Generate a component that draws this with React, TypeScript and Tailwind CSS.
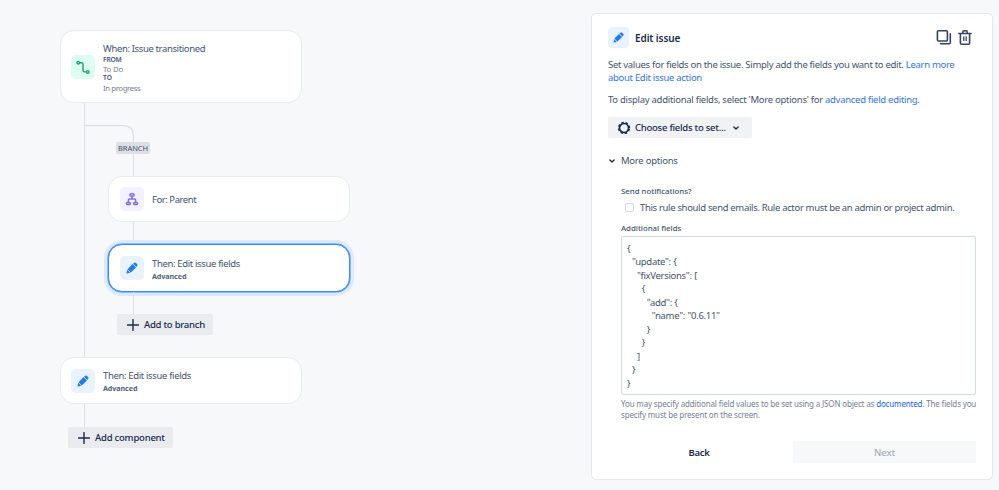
import React, { useState } from 'react';

interface IconProps {
  className?: string;
}

const PencilIcon: React.FC<IconProps> = ({ className }) => (
  <svg viewBox="0 0 14 14" className={className} fill="currentColor">
    <path d="M1.8 8.4 L7.7 2.4 L11.6 6.3 L5.6 12.2 Z" />
    <path d="M8.3 1.9 L9.6 .8 Q10.5 .1 11.4 .9 L13.1 2.6 Q13.9 3.5 13.2 4.4 L12.1 5.7 Z" />
    <path d="M1.4 9.1 L4.9 12.6 L1.1 13.4 Q.4 13.5 .6 12.9 Z" />
  </svg>
);

const TransitionIcon: React.FC = () => (
  <svg viewBox="0 0 14 14" className="size-[14px] text-[#22a06b]" fill="none" stroke="currentColor" strokeWidth="1.4">
    <circle cx="2.2" cy="2.7" r="1.3" />
    <circle cx="11.8" cy="11.9" r="1.3" />
    <path d="M3.8 2.7 H5.6 Q7 2.7 7 4.1 V10.5 Q7 11.9 8.4 11.9 H10.3" />
  </svg>
);

const TreeIcon: React.FC = () => (
  <svg viewBox="0 0 14 14" className="size-[14px] text-[#8270db]" fill="none" stroke="currentColor" strokeWidth="1.5">
    <rect x="5" y="1.7" width="4" height="2.3" rx="0.8" />
    <rect x="1.5" y="10.4" width="3.8" height="2.2" rx="0.8" />
    <rect x="8.7" y="10.4" width="3.8" height="2.2" rx="0.8" />
    <path d="M7 4.2 V7 M3.4 10.2 V8 Q3.4 7 4.4 7 H9.6 Q10.6 7 10.6 8 V10.2" />
  </svg>
);

const PlusIcon: React.FC = () => (
  <svg viewBox="0 0 12 12" className="size-3 shrink-0" stroke="currentColor" strokeWidth="1.4" strokeLinecap="round">
    <path d="M6 0.6 V11.4 M0.6 6 H11.4" />
  </svg>
);

const GearIcon: React.FC = () => (
  <svg viewBox="0 0 14 14" className="size-[14px] shrink-0" fill="none" stroke="currentColor">
    <circle cx="7" cy="7" r="4.5" strokeWidth="1.7" />
    <circle cx="7" cy="7" r="5.4" strokeWidth="1.5" strokeDasharray="2.4 1.84" strokeDashoffset="-0.9" />
  </svg>
);

const ChevronIcon: React.FC = () => (
  <svg viewBox="0 0 6 4" className="h-1 w-1.5 shrink-0" fill="none" stroke="currentColor" strokeWidth="1.4" strokeLinecap="round" strokeLinejoin="round">
    <path d="M0.9 0.9 L3 2.9 L5.1 0.9" />
  </svg>
);

const CopyIcon: React.FC = () => (
  <svg viewBox="0 0 16 16" className="size-4" fill="none" stroke="currentColor" strokeWidth="1.6" strokeLinejoin="round" strokeLinecap="round">
    <rect x="1.4" y="0.8" width="10" height="10.2" rx="1" />
    <path d="M14.3 3.9 V12.6 Q14.3 13.8 13.1 13.8 H4.6" />
  </svg>
);

const TrashIcon: React.FC = () => (
  <svg viewBox="0 0 14 16" className="h-4 w-[14px]" fill="none" stroke="currentColor" strokeWidth="1.6" strokeLinejoin="round" strokeLinecap="round">
    <path d="M0.9 3.5 H13.1 M4.8 3.3 V2.1 Q4.8 0.8 6 0.8 H8 Q9.2 0.8 9.2 2.1 V3.3" />
    <path d="M2.4 3.8 V12.9 Q2.4 14.2 3.6 14.2 H10.4 Q11.6 14.2 11.6 12.9 V3.8" />
    <path d="M5.8 7 V10.4 M8.2 7 V10.4" strokeWidth="1.3" />
  </svg>
);

interface StepCardProps {
  icon: React.ReactNode;
  iconClass: string;
  className: string;
  children: React.ReactNode;
}

const StepCard: React.FC<StepCardProps> = ({ icon, iconClass, className, children }) => (
  <div className={`flex w-[242px] items-center bg-white ${className}`}>
    <div className={`flex size-6 shrink-0 items-center justify-center rounded-[5px] ${iconClass}`}>{icon}</div>
    <div className="ml-2">{children}</div>
  </div>
);

const EditStepText: React.FC = () => (
  <div className="pt-[3px]">
    <div className="text-[9.5px] leading-[13px] tracking-[-0.35px]">Then: Edit issue fields</div>
    <div className="text-[7.2px] leading-[13px] font-bold tracking-[-0.1px] text-[#54637c]">Advanced</div>
  </div>
);

const json = `{
  "update": {
    "fixVersions": [
      {
        "add": {
          "name": "0.6.11"
        }
      }
    ]
  }
}`;

const App: React.FC = () => {
  const [sendEmails, setSendEmails] = useState(false);
  const [fields, setFields] = useState(json);

  return (
    <div className="flex h-[490px] w-[999px] overflow-hidden bg-[#f7f8fa] font-['Noto_Sans',sans-serif] text-[#44546f]">
      {/* Rule flow */}
      <section className="w-[591px] pt-[30px] pl-[60px]">
        <StepCard
          className="h-[73px] rounded-[14px] border border-[#e9ebee] pl-[10px]"
          iconClass="bg-[#dcfff1]"
          icon={<TransitionIcon />}
        >
          <div className="pt-[2px] text-[9.5px] leading-[13px] tracking-[-0.37px]">When: Issue transitioned</div>
          <div className="text-[6.7px] leading-[10px] font-semibold tracking-[-0.2px]">FROM</div>
          <div className="text-[7.8px] leading-[9px] tracking-[-0.2px] text-[#758195]">To Do</div>
          <div className="text-[6.7px] leading-[8px] font-semibold">TO</div>
          <div className="text-[7.8px] leading-[12px] tracking-[-0.4px] text-[#758195]">In progress</div>
        </StepCard>

        <div className="ml-6 h-[254px] border-l border-[#dcdfe4] pt-[22px]">
          <svg viewBox="0 0 50 17" className="h-[17px] w-[50px]" fill="none" stroke="#dcdfe4" strokeWidth="1.2">
            <path d="M0 0.6 H38 Q48.4 0.6 48.4 11 V17" />
          </svg>
          <div className="ml-[31px] w-[34px] rounded-[2px] bg-[#dcdfe4] text-center text-[7.5px] leading-[12px] tracking-[-0.05px]">BRANCH</div>
          <div className="ml-[48px] h-[22px] w-px bg-[#dcdfe4]" />
          <StepCard
            className="ml-[23px] h-[46px] rounded-[14px] border border-[#e9ebee] pl-[11px]"
            iconClass="bg-[#f3f0ff]"
            icon={<TreeIcon />}
          >
            <div className="text-[9.5px] leading-[13px] tracking-[-0.45px]">For: Parent</div>
          </StepCard>
          <div className="ml-[48px] h-[22px] w-px bg-[#dcdfe4]" />
          <StepCard
            className="ml-[23px] h-[48px] rounded-[14px] border border-[#388bff] pl-[11px] shadow-[0_0_0_0.5px_#388bff,0_0_0_4px_#dbeafe]"
            iconClass="bg-[#e9f2ff]"
            icon={<PencilIcon className="size-3 text-[#1d7afc]" />}
          >
            <EditStepText />
          </StepCard>
          <div className="ml-[48px] h-[22px] w-px bg-[#dcdfe4]" />
          <button className="ml-8 flex h-[21px] w-[96px] items-center gap-[5px] rounded-[2px] bg-[#e9ebee] pt-px pl-[10px] text-[9.5px] font-medium tracking-[-0.25px] whitespace-nowrap text-[#172b4d]">
            <PlusIcon />
            Add to branch
          </button>
        </div>

        <StepCard
          className="h-[47px] rounded-[14px] border border-[#e9ebee] pl-[10px]"
          iconClass="bg-[#e9f2ff]"
          icon={<PencilIcon className="size-3 text-[#1d7afc]" />}
        >
          <EditStepText />
        </StepCard>
        <div className="ml-6 h-[23px] w-px bg-[#dcdfe4]" />
        <button className="ml-2 flex h-[21px] w-[105px] items-center gap-[5px] rounded-[2px] bg-[#e9ebee] pl-[10px] text-[9.5px] font-medium tracking-[-0.22px] whitespace-nowrap text-[#172b4d]">
          <PlusIcon />
          <span className="pt-px">Add component</span>
        </button>
      </section>

      {/* Action settings */}
      <section className="mt-[13px] h-[467px] w-[402px] rounded-[5px] border border-[#e6e8ec] bg-white px-4 pt-[13px] text-[9.5px] leading-[13px] tracking-[-0.3px]">
        <header className="flex h-[21px] items-center">
          <div className="flex size-[21px] items-center justify-center rounded-[4px] bg-[#e9f2ff]">
            <PencilIcon className="size-[11px] text-[#1d7afc]" />
          </div>
          <h2 className="ml-1.5 pt-px text-[10px] font-semibold tracking-[-0.1px] text-[#172b4d]">Edit issue</h2>
          <div className="mr-[4px] ml-auto flex items-center gap-[6px] text-[#344563]">
            <CopyIcon />
            <TrashIcon />
          </div>
        </header>

        <p className="mt-[10px] whitespace-nowrap">
          Set values for fields on the issue. Simply add the fields you want to edit. <a className="text-[#3574e8]">Learn more<br />about Edit issue action</a>
        </p>
        <p className="mt-[9px] tracking-[-0.28px] whitespace-nowrap">
          To display additional fields, select 'More options' for <a className="text-[#3574e8]">advanced field editing</a>.
        </p>

        <button className="mt-[11px] flex h-[21px] w-[144px] items-center rounded-[2px] bg-[#f1f2f4] pl-[9px] font-medium tracking-[-0.25px] whitespace-nowrap text-[#172b4d]">
          <GearIcon />
          <span className="mr-[7px] ml-1">Choose fields to set...</span>
          <ChevronIcon />
        </button>

        <div className="mt-4 ml-px flex items-center gap-[6px] text-[#172b4d]">
          <ChevronIcon />
          <span className="tracking-[-0.25px] text-[#44546f]">More options</span>
        </div>

        <div className="ml-[13px]">
          <div className="mt-[18px] text-[7.8px] leading-[12px] font-medium tracking-normal">Send notifications?</div>
          <label className="mt-[4px] flex items-center pl-1 tracking-[-0.33px] whitespace-nowrap">
            <input
              type="checkbox"
              checked={sendEmails}
              onChange={e => setSendEmails(e.target.checked)}
              className="mr-[6px] size-[9px] shrink-0 appearance-none rounded-[2px] border border-[#d5d9e0] checked:bg-blue-600"
            />
            This rule should send emails. Rule actor must be an admin or project admin.
          </label>
          <div className="mt-[8px] text-[7.8px] leading-[13px] font-medium tracking-normal">Additional fields</div>
          <textarea
            value={fields}
            onChange={e => setFields(e.target.value)}
            spellCheck={false}
            className="mt-[1px] block h-[159px] w-[355px] resize-none overflow-hidden rounded-[2px] border border-[#d5d9e0] pt-[5px] pr-1 pl-[5px] leading-[13.45px] [word-spacing:0.3px]"
          />
          <p className="mt-[3px] text-[8px] leading-[11px] tracking-[-0.16px] whitespace-nowrap text-[#758195]">
            You may specify additional field values to be set using a JSON object as <a className="text-[#1d5fe0]">documented</a>. The fields you<br />specify must be present on the screen.
          </p>
        </div>

        <footer className="mt-[21px] flex h-[22px] font-medium tracking-normal">
          <button className="w-[182px] font-semibold tracking-[-0.3px] text-[#172b4d]">Back</button>
          <button className="ml-[3px] w-[183px] rounded-[2px] bg-[#f7f8f9] tracking-[-0.1px] text-[#a5adba]">Next</button>
        </footer>
      </section>
    </div>
  );
};

export default App;
